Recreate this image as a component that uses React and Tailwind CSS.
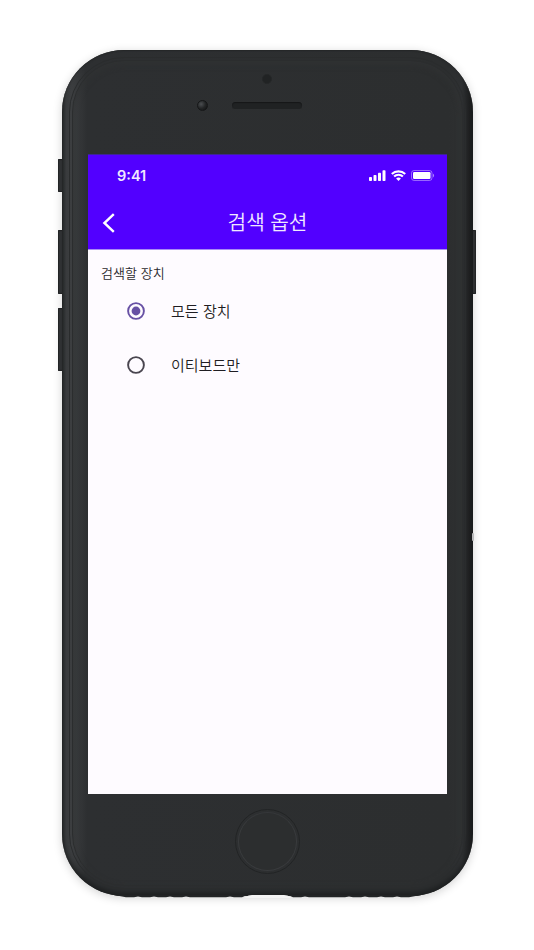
import React, { useState } from 'react'

const OPTIONS = [
    { id: 'all', label: '모든 장치' },
    { id: 'etboard', label: '이티보드만' },
]

const SignalIcon = () => (
    <svg width="17" height="11" viewBox="0 0 17 11" fill="#fff">
        <rect x="0" y="7" width="3" height="4" rx="0.8" />
        <rect x="4.5" y="5" width="3" height="6" rx="0.8" />
        <rect x="9" y="2.7" width="3" height="8.3" rx="0.8" />
        <rect x="13.5" y="0.2" width="3" height="10.8" rx="0.8" />
    </svg>
)

const WifiIcon = () => (
    <svg width="15" height="11" viewBox="0 0 15 11" fill="none" stroke="#fff" strokeWidth="2.1">
        <path d="M0.8 4.1a9.5 9.5 0 0 1 13.4 0" />
        <path d="M3.1 6.6a6.2 6.2 0 0 1 8.8 0" />
        <path d="M7.5 10.9L5.1 8.6a3.4 3.4 0 0 1 4.8 0z" fill="#fff" stroke="none" />
    </svg>
)

const BatteryIcon = () => (
    <svg width="24" height="11" viewBox="0 0 24 11" fill="none">
        <rect x="0.5" y="0.5" width="20.5" height="10" rx="2.6" stroke="#fff" strokeOpacity="0.4" />
        <rect x="2" y="2" width="17.5" height="7" rx="1.2" fill="#fff" />
        <path d="M22 3.8v3.6c.7-.3 1.1-1 1.1-1.8s-.4-1.5-1.1-1.8z" fill="#fff" fillOpacity="0.5" />
    </svg>
)

const StatusBar = () => (
    <div className="flex h-[41px] items-center justify-between pl-[29px] pr-[12px]">
        <span className="pt-[2px] font-['Inter',sans-serif] text-[14.5px] font-semibold leading-none text-[#f0e9ff]">9:41</span>
        <div className="flex items-center gap-[5px]">
            <SignalIcon />
            <WifiIcon />
            <BatteryIcon />
        </div>
    </div>
)

const Header = () => (
    <header className="h-[96px] border-y border-b-[#a98cf5] border-t-[#3d2497] bg-[#5200ff]">
        <StatusBar />
        <div className="grid h-[53px] grid-cols-[40px_1fr_40px] items-center">
            <button className="pl-[14px]" aria-label="뒤로">
                <svg width="13" height="20" viewBox="0 0 13 20" fill="none" stroke="#fff" strokeWidth="2.4">
                    <path d="M11.8 1.2L2.4 10l9.4 8.8" />
                </svg>
            </button>
            <h1 className="text-center text-[20.2px] font-[350] leading-none text-[#f0e9ff] [word-spacing:1px]">검색 옵션</h1>
        </div>
    </header>
)

const Radio = ({ checked }) => (
    <svg width="18" height="18" viewBox="0 0 18 18" fill="none">
        <circle cx="9" cy="9" r="7.9" stroke={checked ? '#6750a4' : '#49454f'} strokeWidth="1.9" />
        {checked && <circle cx="9" cy="9" r="4.4" fill="#6750a4" />}
    </svg>
)

const Screen = () => {
    const [selected, setSelected] = useState('all')

    return (
        <div className="mx-auto h-[640px] w-[359px] bg-[#fefbff]">
            <Header />
            <main className="pt-[15px]">
                <p className="pl-[13px] text-[13px] font-[350] leading-[16px] text-[#2b292e] [word-spacing:1px]">검색할 장치</p>
                <div role="radiogroup" className="pl-[39px] pt-[3px]">
                    {OPTIONS.map((option) => (
                        <button
                            key={option.id}
                            role="radio"
                            aria-checked={selected === option.id}
                            onClick={() => setSelected(option.id)}
                            className="flex h-[54px] w-full items-center gap-[26px] text-left text-[15px] font-[350] leading-none text-[#1f1d22] [word-spacing:1px]"
                        >
                            <Radio checked={selected === option.id} />
                            <span className="pb-[2px]">{option.label}</span>
                        </button>
                    ))}
                </div>
            </main>
        </div>
    )
}

const SideButton = ({ className }) => (
    <div className={`absolute bg-[#333537] shadow-[inset_0_0_1px_1px_#232526] ${className}`} />
)

export default function App() {
    return (
        <div className="flex h-[950px] w-[534px] justify-center overflow-hidden bg-white pl-px pt-[50px] font-['Noto_Sans_CJK_KR',sans-serif]">
            <div className="relative h-[846px] w-[411px]">
                <SideButton className="-left-[4px] top-[109px] h-[33px] w-[6px] rounded-l-[1px]" />
                <SideButton className="-left-[4px] top-[180px] h-[64px] w-[6px] rounded-l-[1px]" />
                <SideButton className="-left-[4px] top-[258px] h-[63px] w-[6px] rounded-l-[1px]" />
                <SideButton className="-right-[3px] top-[180px] h-[64px] w-[6px] rounded-r-[1px]" />

                {/* frame */}
                <div className="relative h-full rounded-[62px] bg-[linear-gradient(90deg,#292b2c_0,#3a3c3e_4px,#3c3e40_10px,#2d2f31_24px,#2c2e2f_385px,#2e3032_400px,#1b1c1d_409px,#161718_411px)] shadow-[0_2px_10px_rgba(0,0,0,0.18),inset_0_1px_1px_#252728,inset_0_-4px_5px_#1e2021]">
                    <div className="absolute inset-[7px] rounded-[55px] border border-[#2a2c2d]" />
                    <div className="absolute inset-[10px] rounded-[52px] border border-[#2b2d2e] bg-[linear-gradient(90deg,#3b3d3f_0,#2d2f31_14px,#2c2e2f_376px,#2f3132_390px)] shadow-[inset_0_3px_6px_#303233]" />

                    <div className="relative flex h-full flex-col">
                        <div className="relative h-[104px]">
                            <div className="absolute left-[200px] top-[24px] size-[10px] rounded-full border border-[#252728] bg-[#212324]" />
                            <div className="absolute left-[135px] top-[50px] size-[11px] rounded-full border border-[#161718] bg-[radial-gradient(circle_at_35%_35%,#4b4e51_0,#242627_50%,#101112_100%)]" />
                            <div className="absolute left-[170px] top-[52px] h-[7px] w-[70px] rounded-full bg-[#202223] shadow-[inset_0_1px_1px_#161718]" />
                        </div>
                        <Screen />
                        <div className="flex flex-1 justify-center pr-px pt-[15px]">
                            <div className="size-[65px] rounded-full border border-[#222425] p-[2px]">
                                <div className="size-full rounded-full border border-[#393b3d] border-t-[#353739] bg-[#2c2e2f]" />
                            </div>
                        </div>
                    </div>
                </div>

                {/* speaker grille bumps under the bottom edge */}
                <svg className="absolute bottom-[-2px] left-0" width="411" height="4" viewBox="0 0 411 4">
                    <path d="M52 1h133l-5 2.2h-8l-4-.8-4 .8h-36l-4-.8-4 .8h-8l-4-.8-4 .8h-8l-4-.8-4 .8h-8l-4-.8-4 .8h-8z" fill="#222425" />
                    <path d="M359 1H226l5 2.2h8l4-.8 4 .8h36l4-.8 4 .8h8l4-.8 4 .8h8l4-.8 4 .8h8l4-.8 4 .8h8z" fill="#222425" />
                    <path d="M181 4c4 0 3-3 9-3h32c6 0 5 3 9 3z" fill="#f3f3f3" />
                </svg>
                <div className="absolute -right-px top-[483px] h-[8px] w-[2px] rounded-full bg-[#b8b8b9]" />
            </div>
        </div>
    )
}
